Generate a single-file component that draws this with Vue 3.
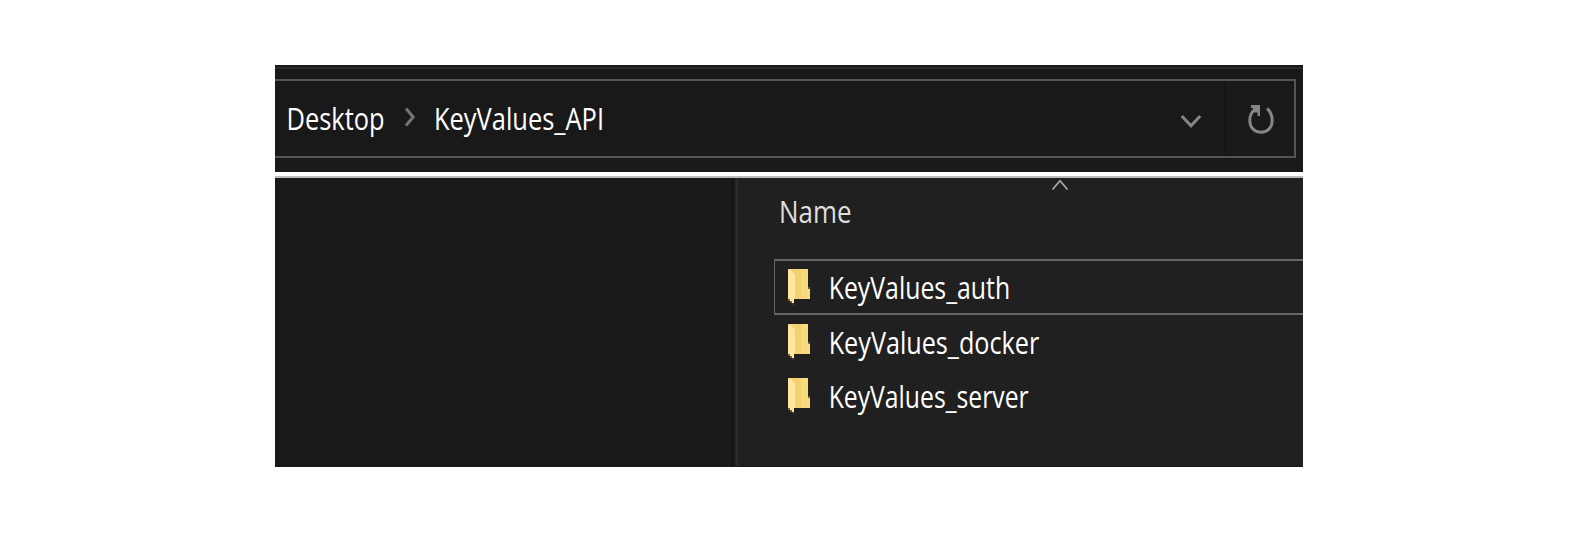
<script setup>
const rows = [
  { name: 'KeyValues_auth', width: 181.5, selected: true },
  { name: 'KeyValues_docker', width: 210.5 },
  { name: 'KeyValues_server', width: 200 },
]
</script>

<template>
  <main class="window">
    <header class="toolbar">
      <div class="address">
        <svg class="crumb first" width="99" height="40"><text x="-0.5" y="29" textLength="98" lengthAdjust="spacingAndGlyphs">Desktop</text></svg>
        <svg class="sep" width="14" height="22" viewBox="0 0 14 22"><path d="M2 1.5 L9.2 10 L2 18.5" /></svg>
        <svg class="crumb last" width="172" height="40"><text x="0" y="29" textLength="170" lengthAdjust="spacingAndGlyphs">KeyValues_API</text></svg>
        <div class="history">
          <svg width="24" height="18" viewBox="0 0 24 18"><path d="M2.8 3 L12 12.8 L21.2 3" /></svg>
        </div>
        <div class="refresh">
          <svg width="28" height="32" viewBox="0 0 28 32">
            <path d="M7 6 C3.8 9 2.8 12 2.8 16.5 C2.8 23.5 7.5 28.3 14 28.3 C20.5 28.3 25.2 23.5 25.2 16.5 C25.2 11 23.5 7.5 20 4.5" />
            <path class="head" d="M4 1 H13 V12 H10.5 V8.5 H6 L6 4 H4 Z" />
          </svg>
        </div>
      </div>
    </header>
    <div class="rule"></div>
    <div class="body">
      <aside class="side"></aside>
      <section class="files">
        <svg class="sort" width="18" height="12" viewBox="0 0 18 12"><path d="M1.5 10.5 L9 1.7 L16.5 10.5" /></svg>
        <svg class="heading" width="80" height="40"><text x="-1" y="29.5" textLength="72.5" lengthAdjust="spacingAndGlyphs">Name</text></svg>
        <ul>
          <li v-for="row in rows" :key="row.name" :class="{ selected: row.selected }">
            <svg class="folder" width="24" height="37" viewBox="0 0 24 37">
              <path fill="#f3d173" d="M0 0H20V18H22V30H6L2 4Z" />
              <path fill="#f9da7c" d="M13 0H20V18H22V30H13Z" />
              <path fill="#ffe7a1" d="M0 0L4 2L7 6V30H6V34H4V32H2V30H0Z" />
              <path fill="#70613e" d="M20 18H22V20H20ZM0 30H2V32H0ZM2 32H4V34H2Z" />
              <path fill="#3c3729" d="M4 34H6V36H4Z" />
            </svg>
            <svg class="label" width="230" height="40"><text x="0.7" y="29.3" :textLength="row.width" lengthAdjust="spacingAndGlyphs">{{ row.name }}</text></svg>
          </li>
        </ul>
      </section>
    </div>
  </main>
</template>

<style>
html, body { background: #fff; }
</style>

<style scoped>
* { box-sizing: border-box; }
svg { display: block; flex: none; overflow: visible; }
text { font-family: "Open Sans", "Noto Sans", sans-serif; font-size: 31.5px; fill: #fff; }
.window { padding: 65px 0 0 275px; width: 1303px; }
.toolbar { height: 107px; background: linear-gradient(#292929, #292929) 0 2px / 100% 2px no-repeat #191919; padding-top: 14px; }
.address { width: 1021px; height: 79px; border: 2px solid #555; border-left: 0; display: flex; }
.crumb { margin-top: 20px; }
.first { margin-left: 12px; }
.sep { margin: 26px 0 0 18px; }
.last { margin-left: 16px; }
.sep path, .history path, .refresh path { fill: none; stroke: #858585; stroke-width: 3; }
.sep path { stroke: #757575; }
.history { margin-left: auto; width: 46px; height: 75px; border-right: 1px solid #141414; padding-top: 32px; }
.refresh { width: 69px; padding: 23px 0 0 22px; }
.refresh .head { fill: #858585; stroke: none; }
.rule { height: 6px; border-bottom: 2px solid #bdbdbd; background: #fff; }
.body { height: 289px; display: flex; border-bottom: 1px solid #191919; background: #202020; }
.side { width: 459px; background: #191919; border-right: 2px solid #131313; }
.files { width: 567px; margin-left: 2px; border-left: 2px solid #2b2b2b; }
.sort { margin: 1px 0 0 313px; }
.sort path { fill: none; stroke: #aaa; stroke-width: 1.7; }
.heading { margin: 2px 0 0 42px; }
.heading text { fill: #dedede; }
ul { list-style: none; margin: 26px 0 0 36px; padding: 0; }
li { display: flex; height: 54px; padding-left: 14px; }
.selected { height: 56px; border: 2px solid #666; border-right: 0; border-left-width: 1px; padding-left: 13px; }
.folder { margin-top: 9px; }
.label { margin: 10px 0 0 16px; }
.selected .folder { margin-top: 8px; }
.selected .label { margin-top: 9px; }
</style>
